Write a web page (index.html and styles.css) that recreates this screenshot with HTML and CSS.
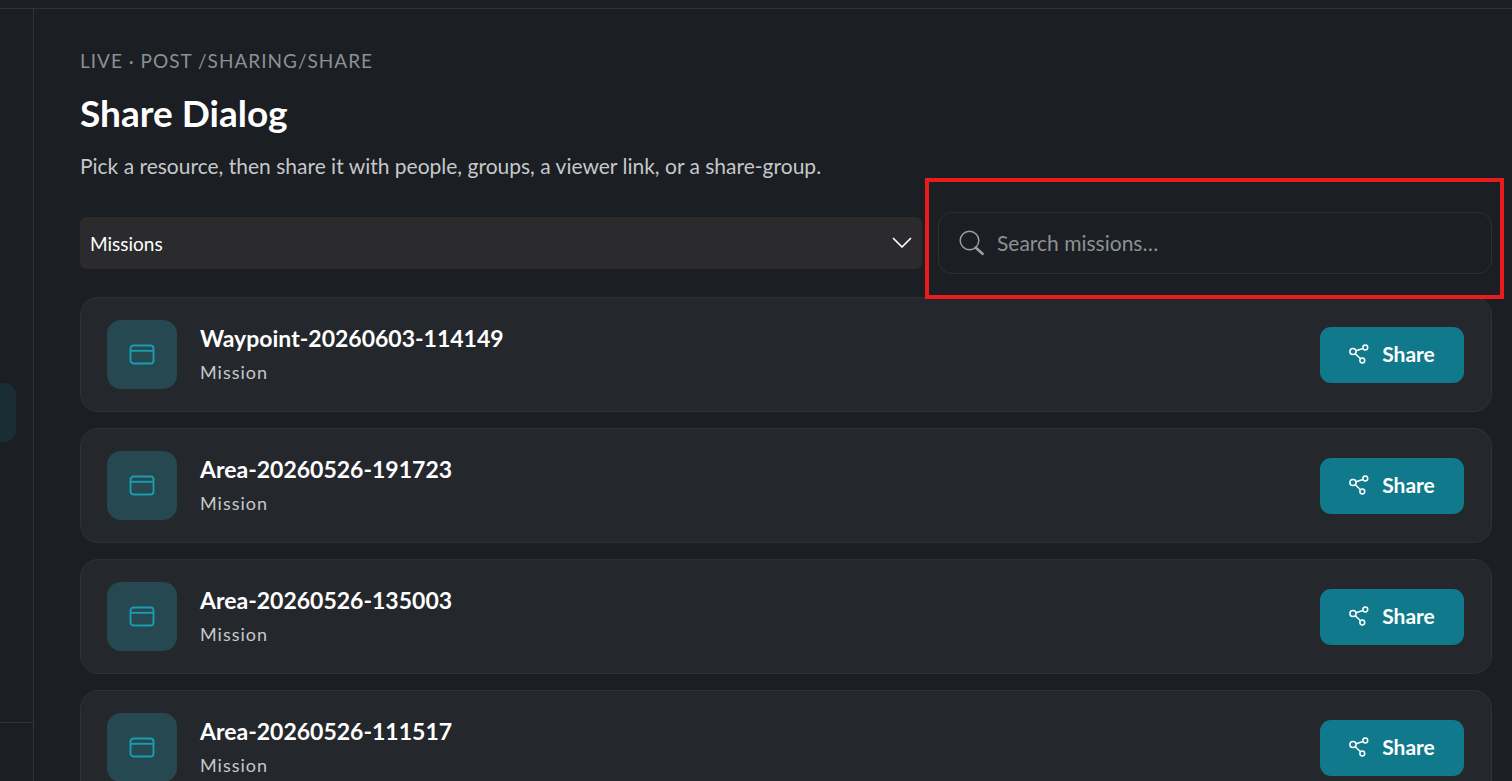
FILE: index.html
```html
<!DOCTYPE html>
<html lang="en">
<head>
  <meta charset="UTF-8">
  <meta name="viewport" content="width=device-width, initial-scale=1">
  <title>Share Dialog</title>
  <link rel="stylesheet" href="styles.css">
</head>
<body>

  <!-- shared icons -->
  <svg class="sprite" aria-hidden="true">
    <symbol id="icon-window" viewBox="0 0 26 22">
      <rect x="1.5" y="1.5" width="23" height="18" rx="3" fill="none" stroke="currentColor" stroke-width="1.9"/>
      <path d="M1.5 6.8h23" fill="none" stroke="currentColor" stroke-width="1.9"/>
    </symbol>
    <symbol id="icon-share" viewBox="0 0 20 20">
      <g fill="none" stroke="currentColor" stroke-width="1.5">
        <circle cx="4" cy="7.5" r="3.1"/>
        <circle cx="16.3" cy="3.5" r="2.4"/>
        <circle cx="13.3" cy="16.5" r="2.4"/>
        <path d="M7 6.7l7-2.2M6.2 9.7l5.4 5.1"/>
      </g>
    </symbol>
  </svg>

  <header class="topbar"></header>

  <div class="layout">
    <aside class="sidebar">
      <div class="sidebar-nav"><div class="sidebar-active"></div></div>
      <div class="sidebar-footer"></div>
    </aside>

    <main class="content">
      <p class="eyebrow">LIVE · POST /SHARING/SHARE</p>
      <h1>Share Dialog</h1>
      <p class="lead">Pick a resource, then share it with people, groups, a viewer link, or a share-group.</p>

      <div class="toolbar">
        <div class="select-wrap">
          <select class="type-select" aria-label="Resource type">
            <option>Missions</option>
          </select>
          <svg class="chevron" viewBox="0 0 20 12" aria-hidden="true"><path d="M1.5 1.5l8.5 8.5 8.5-8.5" fill="none" stroke="currentColor" stroke-width="1.7" stroke-linecap="round" stroke-linejoin="round"/></svg>
        </div>
        <div class="search-wrap">
          <label class="search">
            <svg class="search-icon" viewBox="0 0 26 26" aria-hidden="true">
              <circle cx="10.5" cy="10.5" r="9.3" fill="none" stroke="currentColor" stroke-width="1.5"/>
              <path d="M16.8 17.8l6.7 5.9" fill="none" stroke="currentColor" stroke-width="2.8" stroke-linecap="round"/>
            </svg>
            <input type="text" placeholder="Search missions…" aria-label="Search missions">
          </label>
          <div class="highlight"></div>
        </div>
      </div>

      <div class="list">
        <article class="card">
          <div class="card-icon"><svg><use href="#icon-window"/></svg></div>
          <div class="card-text">
            <h2>Waypoint-20260603-114149</h2>
            <p>Mission</p>
          </div>
          <button class="share-btn" type="button"><svg><use href="#icon-share"/></svg>Share</button>
        </article>
        <article class="card">
          <div class="card-icon"><svg><use href="#icon-window"/></svg></div>
          <div class="card-text">
            <h2>Area-20260526-191723</h2>
            <p>Mission</p>
          </div>
          <button class="share-btn" type="button"><svg><use href="#icon-share"/></svg>Share</button>
        </article>
        <article class="card">
          <div class="card-icon"><svg><use href="#icon-window"/></svg></div>
          <div class="card-text">
            <h2>Area-20260526-135003</h2>
            <p>Mission</p>
          </div>
          <button class="share-btn" type="button"><svg><use href="#icon-share"/></svg>Share</button>
        </article>
        <article class="card">
          <div class="card-icon"><svg><use href="#icon-window"/></svg></div>
          <div class="card-text">
            <h2>Area-20260526-111517</h2>
            <p>Mission</p>
          </div>
          <button class="share-btn" type="button"><svg><use href="#icon-share"/></svg>Share</button>
        </article>
      </div>
    </main>
  </div>

</body>
</html>
```
FILE: styles.css
```css
* {
  box-sizing: border-box;
}

body {
  margin: 0;
  height: 100vh;
  display: flex;
  flex-direction: column;
  overflow: hidden;
  background: #1b1e22;
  color: #fff;
  font-family: Lato, sans-serif;
}

h1, h2, p {
  margin: 0;
}

.sprite {
  display: none;
}

.topbar {
  flex: none;
  height: 9px;
  border-bottom: 1px solid #303338;
}

.layout {
  flex: 1;
  min-height: 0;
  display: flex;
}

/* sidebar */
.sidebar {
  flex: none;
  width: 34px;
  display: flex;
  flex-direction: column;
  border-right: 1px solid #303338;
}

.sidebar-nav {
  flex: 1;
  display: flex;
  flex-direction: column;
  justify-content: center;
  padding: 94px 17px 0 0;
}

.sidebar-active {
  height: 59px;
  border-radius: 0 12px 12px 0;
  background: #1a2d33;
}

.sidebar-footer {
  height: 59px;
  border-top: 1px solid #303338;
}

/* content */
.content {
  flex: 1;
  min-width: 0;
  overflow: hidden;
  padding: 40px 20px 0 46px;
}

.eyebrow {
  font-size: 19px;
  line-height: 24px;
  letter-spacing: 1px;
  color: #8d9094;
}

h1 {
  margin-top: 17px;
  font-size: 37px;
  line-height: 46px;
  font-weight: 700;
}

.lead {
  margin-top: 14px;
  font-size: 21px;
  line-height: 32px;
  color: #c6c8ca;
}

.toolbar {
  display: flex;
  align-items: center;
  gap: 16px;
  margin-top: 30px;
}

.select-wrap {
  position: relative;
  flex: 1;
}

.type-select {
  display: block;
  width: 100%;
  height: 52px;
  padding: 0 40px 0 10px;
  border: 0;
  border-radius: 6px;
  appearance: none;
  background: #2b2b2e;
  color: #fff;
  font-family: inherit;
  font-size: 19px;
}

.chevron {
  position: absolute;
  right: 10px;
  top: 20px;
  width: 20px;
  height: 12px;
  pointer-events: none;
}

.search-wrap {
  position: relative;
  flex: 0 0 554px;
}

.search {
  display: flex;
  align-items: center;
  gap: 12px;
  height: 62px;
  padding: 0 20px;
  border: 1px solid #2c2f33;
  border-radius: 14px;
}

.search-icon {
  flex: none;
  width: 26px;
  height: 26px;
  color: #9a9da0;
}

.search input {
  flex: 1;
  min-width: 0;
  padding: 0 0 2px;
  border: 0;
  outline: none;
  background: none;
  color: #fff;
  font-family: inherit;
  font-size: 21px;
}

.search input::placeholder {
  color: #8d9094;
  opacity: 1;
}

.highlight {
  position: absolute;
  inset: -34px -12px -25px -13px;
  border: 4px solid #e81c1c;
  pointer-events: none;
}

/* list */
.list {
  display: flex;
  flex-direction: column;
  gap: 16px;
  margin-top: 23px;
}

.card {
  display: flex;
  align-items: center;
  gap: 23px;
  padding: 22px 27px 22px 26px;
  border: 1px solid #2e3136;
  border-radius: 18px;
  background: #24272b;
}

.card-icon {
  flex: none;
  display: flex;
  align-items: center;
  justify-content: center;
  width: 70px;
  height: 69px;
  border-radius: 14px;
  background: #264850;
  color: #1a9db2;
}

.card-icon svg {
  width: 26px;
  height: 22px;
}

.card-text {
  flex: 1;
  min-width: 0;
}

.card-text h2 {
  font-size: 23px;
  line-height: 34px;
  font-weight: 700;
}

.card-text p {
  font-size: 18px;
  line-height: 34px;
  letter-spacing: 1px;
  color: #c6c8ca;
}

.share-btn {
  display: flex;
  align-items: center;
  justify-content: center;
  gap: 13px;
  width: 144px;
  height: 56px;
  padding: 0 0 2px;
  border: 0;
  border-radius: 11px;
  background: #107a8c;
  color: #fff;
  font-family: inherit;
  font-size: 21px;
  font-weight: 700;
  cursor: pointer;
}

.share-btn svg {
  width: 20px;
  height: 20px;
}

.share-btn:hover {
  background: #138ba0;
}
```
